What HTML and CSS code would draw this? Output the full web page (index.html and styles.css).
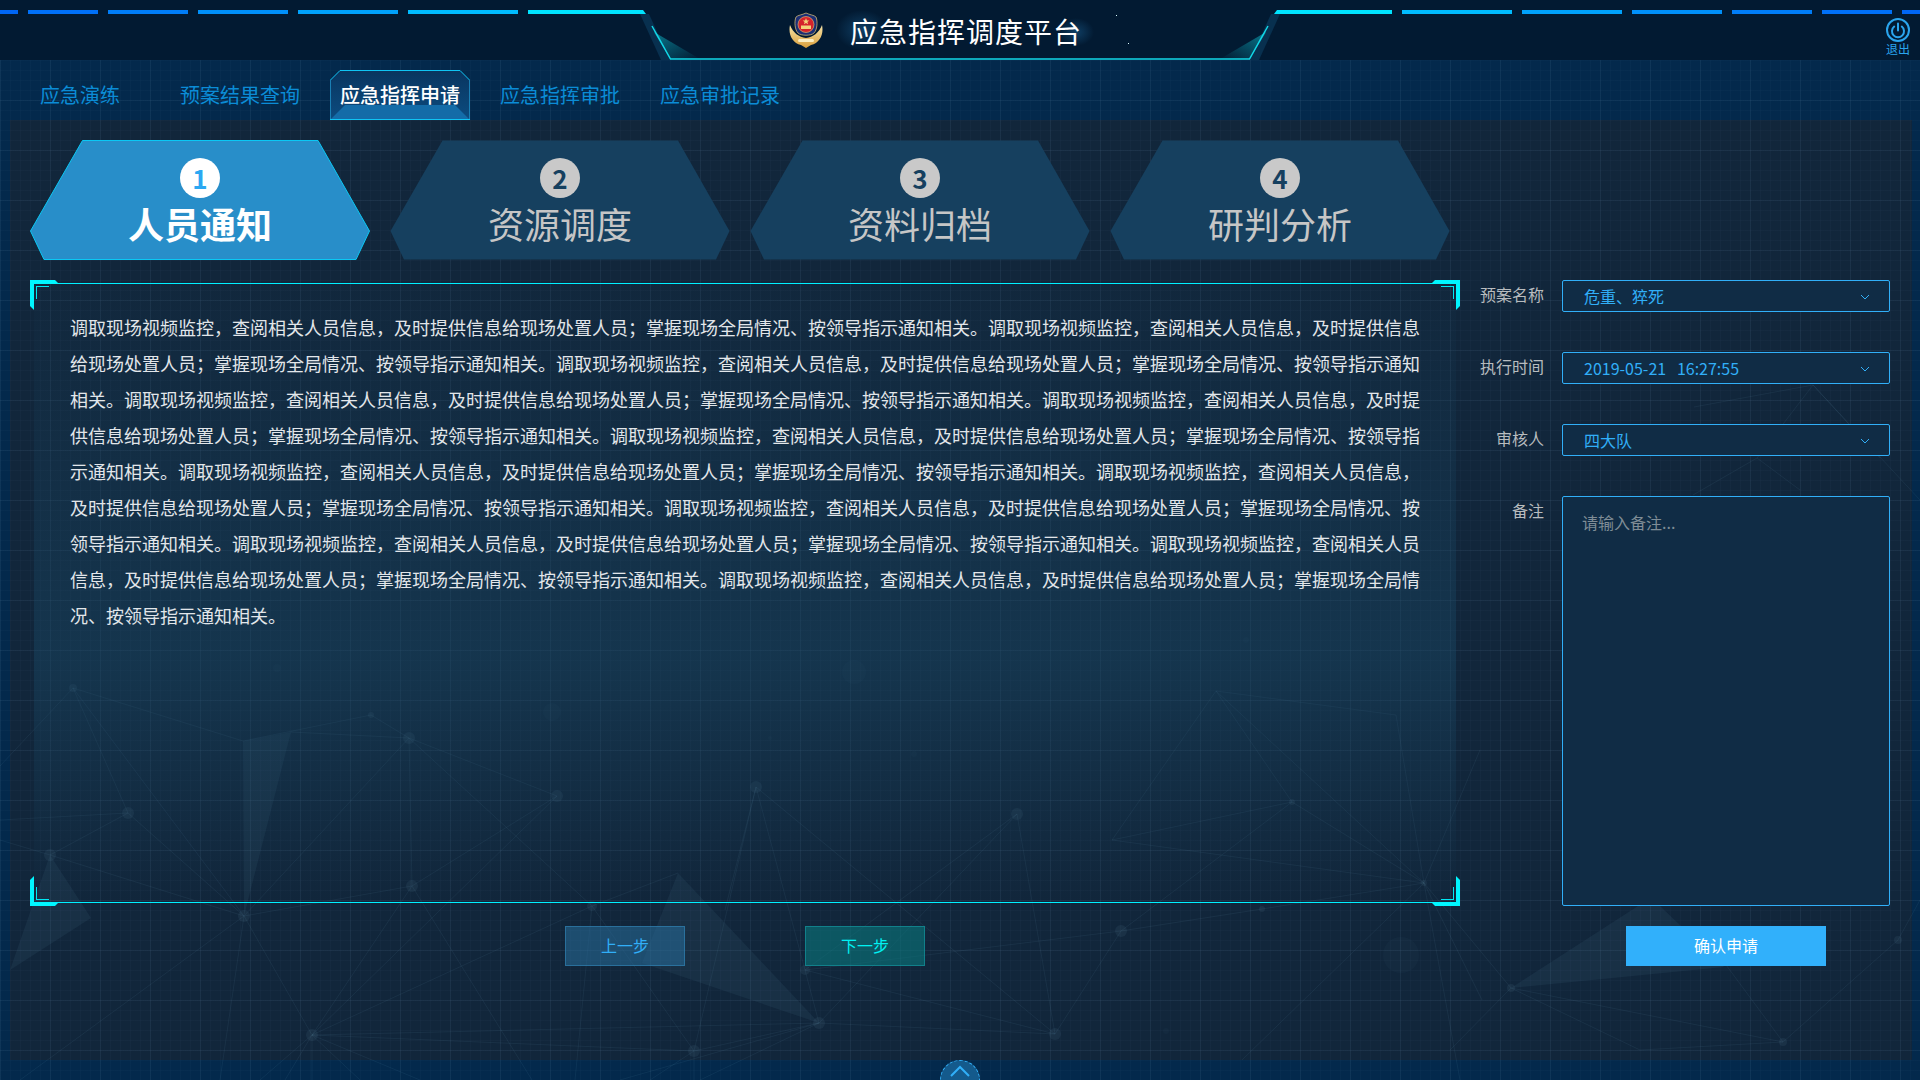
FILE: index.html
```html
<!DOCTYPE html>
<html lang="zh-CN">
<head>
<meta charset="utf-8">
<title>应急指挥调度平台</title>
<link rel="stylesheet" href="styles.css">
</head>
<body>
<div class="page">
  <svg class="network" viewBox="0 0 1920 1080" width="1920" height="1080" aria-hidden="true">
    <g class="net-fill">
      <polygon points="243,741 291,732 244,916"/>
      <polygon points="50,855 91,918 10,970"/>
      <polygon points="678,873 819,1023 642,963"/>
      <polygon points="1511,988 1638,906 1660,906 1724,967"/>
    </g>
    <path class="net-lines" d="M73 688L128 813M73 688L243 741M73 688L244 916M73 688L0 766M128 813L50 855M128 813L244 916M128 813L0 820M50 855L244 916M50 855L0 840M243 741L371 715M371 715L409 738M291 732L409 738M409 738L557 796M409 738L244 916M409 738L412 886M409 738L592 906M557 796L412 886M557 796L312 1035M412 886L244 916M412 886L312 1035M412 886L532 1080M592 906L312 1035M592 906L694 1051M592 906L678 873M592 906L575 1080M244 916L312 1035M244 916L20 1080M244 916L220 1080M312 1035L694 1051M312 1035L819 1023M312 1035L260 1080M312 1035L285 1080M312 1035L312 1080M312 1035L360 1080M312 1035L420 1080M694 1051L819 1023M694 1051L650 1080M694 1051L694 1080M694 1051L756 787M756 787L725 910M756 787L805 970M756 787L1055 1034M805 970L819 1023M805 970L1055 1034M805 970L1121 931M1017 814L805 970M1017 814L819 1023M1017 814L1055 1034M819 1023L1055 1034M819 1023L700 1080M819 1023L620 1080M1121 931L1262 909M1262 909L1424 883M1121 931L1055 1034M1121 931L1292 802M1292 802L1112 840M1112 840L1424 883M1292 802L1424 883M1216 691L1112 840M1216 691L1292 802M1216 691L1396 715M1216 691L1424 883M1396 715L1424 883M1424 883L1242 1060M1424 883L1482 1000M1424 883L1480 750M1424 883L1511 988M1424 883L1460 1080M1511 988L1783 1042M1511 988L1450 1050M1511 988L1640 1050M1783 1042L1898 940M1783 1042L1715 950M1783 1042L1640 1050M1898 940L1920 900M1813 385L1694 407M1813 385L1757 458M1813 385L1880 458M1813 385L1920 500M1757 458L1800 490M1757 458L1693 495"/>
    <g class="net-nodes">
      <circle cx="73" cy="688" r="4"/><circle cx="128" cy="813" r="6"/><circle cx="50" cy="855" r="6"/><circle cx="244" cy="916" r="6"/><circle cx="409" cy="738" r="6"/><circle cx="371" cy="715" r="3"/><circle cx="557" cy="796" r="6"/><circle cx="412" cy="886" r="6"/><circle cx="592" cy="906" r="5"/><circle cx="312" cy="1035" r="6"/><circle cx="694" cy="1051" r="6"/><circle cx="756" cy="787" r="6"/><circle cx="1017" cy="814" r="6"/><circle cx="1292" cy="802" r="3"/><circle cx="1424" cy="883" r="3"/><circle cx="1121" cy="931" r="6"/><circle cx="1262" cy="909" r="3"/><circle cx="805" cy="970" r="5"/><circle cx="819" cy="1023" r="6"/><circle cx="1055" cy="1034" r="6"/><circle cx="1511" cy="988" r="4"/><circle cx="1783" cy="1042" r="4"/><circle cx="1898" cy="940" r="4"/>
    </g>
    <g class="net-faint">
      <circle cx="854" cy="672" r="12"/><circle cx="552" cy="712" r="9"/><circle cx="277" cy="668" r="4"/><circle cx="1401" cy="955" r="18"/><circle cx="1246" cy="640" r="3"/><circle cx="914" cy="754" r="3"/><circle cx="770" cy="738" r="2"/><circle cx="1166" cy="1031" r="3"/>
    </g>
  </svg>

  <header class="topbar">
    <svg class="topbar-art" viewBox="620 0 680 60" width="680" height="60" aria-hidden="true">
      <defs>
        <linearGradient id="glowL" x1="0" y1="0" x2="1" y2="1"><stop offset="0" stop-color="#10d5e5" stop-opacity=".5"/><stop offset="1" stop-color="#10d5e5" stop-opacity="0"/></linearGradient>
        <linearGradient id="glowR" x1="1" y1="0" x2="0" y2="1"><stop offset="0" stop-color="#10d5e5" stop-opacity=".5"/><stop offset="1" stop-color="#10d5e5" stop-opacity="0"/></linearGradient>
        <radialGradient id="blob"><stop offset="0" stop-color="#1a5c8c" stop-opacity=".55"/><stop offset="1" stop-color="#1a5c8c" stop-opacity="0"/></radialGradient>
      </defs>
      <polygon class="slant" points="640,14 649,14 670,60 661,60"/>
      <polygon class="slant" points="1280,14 1271,14 1250,60 1259,60"/>
      <polygon fill="url(#glowL)" points="654,32 670,59 700,59"/>
      <polygon fill="url(#glowR)" points="1266,32 1250,59 1220,59"/>
      <polyline class="edge" points="652,26 670.5,59 1249.5,59 1268,26"/>
      <ellipse fill="url(#blob)" cx="862" cy="30" rx="26" ry="20"/>
      <ellipse fill="url(#blob)" cx="1076" cy="32" rx="18" ry="14"/>
      <rect class="speck" x="1116" y="15" width="1" height="1"/><rect class="speck" x="1128" y="43" width="1" height="1"/>
    </svg>
    <div class="dashes">
      <span class="dash dash-a w18"></span><span class="dash dash-b w70"></span><span class="dash dash-c w80"></span><span class="dash dash-d w90"></span><span class="dash dash-e w100"></span><span class="dash dash-f w110"></span><span class="dash dash-g w118 cut-l"></span>
    </div>
    <div class="brand">
      <svg class="emblem" viewBox="0 0 34 36" width="34" height="36" aria-hidden="true">
        <defs><linearGradient id="gold" x1="0" y1="0" x2="0" y2="1"><stop offset="0" stop-color="#f6e3a8"/><stop offset="1" stop-color="#d99f3c"/></linearGradient></defs>
        <path fill="url(#gold)" d="M1 13C-1 22 3 31 12 33L17 36L22 33C31 31 35 22 33 13C30 21 24 25 17 26C10 25 4 21 1 13Z"/>
        <path fill="#1b2f74" stroke="#e8c878" stroke-width=".7" d="M17 1C21 3 25 3 27 5C29 10 28 18 25 21C22 24 12 24 9 21C6 18 5 10 7 5C9 3 13 3 17 1Z"/>
        <circle cx="17" cy="12.5" r="8" fill="#d5232c" stroke="#e8c878" stroke-width=".6"/>
        <rect x="12" y="13.5" width="10" height="3.5" fill="#f2d27a"/>
        <path fill="#f2d27a" d="M17 6l.9 2.4h2.4l-1.9 1.5.7 2.4-2.1-1.4-2.1 1.4.7-2.4-1.9-1.5h2.4z"/>
        <rect x="9" y="27" width="16" height="3" rx="1.5" fill="#fbeec2"/>
      </svg>
      <h1 class="brand-title">应急指挥调度平台</h1>
    </div>
    <div class="dashes">
      <span class="dash dash-g w118 cut-r"></span><span class="dash dash-f w110"></span><span class="dash dash-e w100"></span><span class="dash dash-d w90"></span><span class="dash dash-c w80"></span><span class="dash dash-b w70"></span><span class="dash dash-a w18"></span>
    </div>
    <div class="logout">
      <svg viewBox="0 0 24 24" width="24" height="24" aria-hidden="true">
        <circle cx="12" cy="12" r="11" class="logout-ring"/>
        <path class="logout-ring" d="M8.2 8.6a6 6 0 1 0 7.6 0M12 5.5v7"/>
      </svg>
      <span class="logout-text">退出</span>
    </div>
  </header>

  <nav class="tabs">
    <a class="tab tab-first">应急演练</a>
    <a class="tab">预案结果查询</a>
    <a class="tab tab-active">
      <svg class="tab-shape" viewBox="0 0 140 50" width="140" height="50" aria-hidden="true">
        <defs><linearGradient id="tabfill" x1="0" y1="0" x2="0" y2="1"><stop offset="0" stop-color="#09355f"/><stop offset="1" stop-color="#0c4c80"/></linearGradient></defs>
        <polygon fill="url(#tabfill)" points="10,.5 130,.5 139.5,10 139.5,49.5 .5,49.5 .5,10"/>
        <polygon fill="#146ca8" points="15,35 125,35 139.5,49.5 .5,49.5"/>
        <polyline class="tab-edge-side" points=".5,49.5 .5,10"/>
        <polyline class="tab-edge-side" points="139.5,49.5 139.5,10"/>
        <polyline class="tab-edge" points=".5,10 10,.5 130,.5 139.5,10"/>
        <line class="tab-edge" x1="0" y1="49.5" x2="140" y2="49.5"/>
      </svg>
      <span class="tab-label">应急指挥申请</span>
    </a>
    <a class="tab">应急指挥审批</a>
    <a class="tab">应急审批记录</a>
  </nav>

  <main class="content">
    <ol class="steps">
      <li class="step step-active">
        <svg class="step-shape" viewBox="0 0 340 120" width="340" height="120" aria-hidden="true"><polygon points="52.5,.5 288,.5 339.5,91 326,119.5 14,119.5 .5,91"/></svg>
        <span class="step-num">1</span><span class="step-title">人员通知</span>
      </li>
      <li class="step">
        <svg class="step-shape" viewBox="0 0 340 120" width="340" height="120" aria-hidden="true"><polygon points="52.5,.5 288,.5 339.5,91 326,119.5 14,119.5 .5,91"/></svg>
        <span class="step-num">2</span><span class="step-title">资源调度</span>
      </li>
      <li class="step">
        <svg class="step-shape" viewBox="0 0 340 120" width="340" height="120" aria-hidden="true"><polygon points="52.5,.5 288,.5 339.5,91 326,119.5 14,119.5 .5,91"/></svg>
        <span class="step-num">3</span><span class="step-title">资料归档</span>
      </li>
      <li class="step">
        <svg class="step-shape" viewBox="0 0 340 120" width="340" height="120" aria-hidden="true"><polygon points="52.5,.5 288,.5 339.5,91 326,119.5 14,119.5 .5,91"/></svg>
        <span class="step-num">4</span><span class="step-title">研判分析</span>
      </li>
    </ol>

    <div class="workspace">
      <section class="panel">
        <i class="corner corner-tl"></i><i class="corner corner-tr"></i><i class="corner corner-bl"></i><i class="corner corner-br"></i>
        <div class="panel-surface">
          <p class="panel-text">调取现场视频监控，查阅相关人员信息，及时提供信息给现场处置人员；掌握现场全局情况、按领导指示通知相关。调取现场视频监控，查阅相关人员信息，及时提供信息给现场处置人员；掌握现场全局情况、按领导指示通知相关。调取现场视频监控，查阅相关人员信息，及时提供信息给现场处置人员；掌握现场全局情况、按领导指示通知相关。调取现场视频监控，查阅相关人员信息，及时提供信息给现场处置人员；掌握现场全局情况、按领导指示通知相关。调取现场视频监控，查阅相关人员信息，及时提供信息给现场处置人员；掌握现场全局情况、按领导指示通知相关。调取现场视频监控，查阅相关人员信息，及时提供信息给现场处置人员；掌握现场全局情况、按领导指示通知相关。调取现场视频监控，查阅相关人员信息，及时提供信息给现场处置人员；掌握现场全局情况、按领导指示通知相关。调取现场视频监控，查阅相关人员信息，及时提供信息给现场处置人员；掌握现场全局情况、按领导指示通知相关。调取现场视频监控，查阅相关人员信息，及时提供信息给现场处置人员；掌握现场全局情况、按领导指示通知相关。调取现场视频监控，查阅相关人员信息，及时提供信息给现场处置人员；掌握现场全局情况、按领导指示通知相关。调取现场视频监控，查阅相关人员信息，及时提供信息给现场处置人员；掌握现场全局情况、按领导指示通知相关。调取现场视频监控，查阅相关人员信息，及时提供信息给现场处置人员；掌握现场全局情况、按领导指示通知相关。</p>
        </div>
      </section>

      <form class="form">
        <div class="field">
          <span class="field-label">预案名称</span>
          <div class="select"><span>危重、猝死</span><svg class="chevron" viewBox="0 0 10 6" width="10" height="6" aria-hidden="true"><polyline points="1,1 5,5 9,1"/></svg></div>
        </div>
        <div class="field">
          <span class="field-label">执行时间</span>
          <div class="select"><span class="keep-space">2019-05-21   16:27:55</span><svg class="chevron" viewBox="0 0 10 6" width="10" height="6" aria-hidden="true"><polyline points="1,1 5,5 9,1"/></svg></div>
        </div>
        <div class="field">
          <span class="field-label">审核人</span>
          <div class="select"><span>四大队</span><svg class="chevron" viewBox="0 0 10 6" width="10" height="6" aria-hidden="true"><polyline points="1,1 5,5 9,1"/></svg></div>
        </div>
        <div class="field field-grow">
          <span class="field-label field-label-top">备注</span>
          <textarea class="notes" placeholder="请输入备注..."></textarea>
        </div>
      </form>

      <div class="actions">
        <button type="button" class="btn btn-prev">上一步</button>
        <button type="button" class="btn btn-next">下一步</button>
      </div>
      <div class="confirm-row">
        <button type="button" class="btn btn-confirm">确认申请</button>
      </div>
    </div>
  </main>

  <footer class="bottombar">
    <div class="collapse">
      <svg viewBox="0 0 22 12" width="22" height="12" aria-hidden="true"><polyline points="2,11 11,2 20,11"/></svg>
    </div>
  </footer>
</div>
</body>
</html>
```

FILE: styles.css
```css
* { box-sizing: border-box; }
html, body { margin: 0; padding: 0; background: #03284a; }
body { font-family: "Noto Sans CJK SC", "Noto Sans", sans-serif; }

.page {
  position: relative;
  width: 1920px;
  height: 1080px;
  overflow: hidden;
  display: flex;
  flex-direction: column;
  background: #03294c;
}
.page::after {
  content: "";
  position: absolute;
  inset: 0;
  pointer-events: none;
  background-image:
    linear-gradient(to right, rgba(160,210,240,.05) 1px, transparent 1px),
    linear-gradient(to bottom, rgba(160,210,240,.05) 1px, transparent 1px),
    linear-gradient(to right, rgba(160,210,240,.022) 1px, transparent 1px),
    linear-gradient(to bottom, rgba(160,210,240,.022) 1px, transparent 1px);
  background-size: 50px 50px, 50px 50px, 10px 10px, 10px 10px;
}
.network { position: absolute; left: 0; top: 0; z-index: 1; pointer-events: none; }
.net-fill polygon { fill: rgba(120,175,205,.075); }
.net-lines { fill: none; stroke: rgba(130,185,215,.075); stroke-width: 1; }
.net-nodes circle { fill: rgba(120,165,190,.09); }
.net-faint circle { fill: rgba(120,165,190,.035); }

/* header */
.topbar {
  position: relative;
  z-index: 2;
  flex: 0 0 60px;
  display: flex;
  align-items: flex-start;
  background: #021a32;
}
.topbar-art { position: absolute; left: 620px; top: 0; }
.slant { fill: #08304f; }
.edge { fill: none; stroke: #12d8e8; stroke-width: 1.5; }
.speck { fill: #dff; }
.dashes { display: flex; gap: 10px; margin-top: 10px; flex: 0 0 646px; position: relative; }
.dash { display: block; height: 4px; }
.w18 { width: 18px; } .w70 { width: 70px; } .w80 { width: 80px; } .w90 { width: 90px; }
.w100 { width: 100px; } .w110 { width: 110px; } .w118 { width: 118px; }
.dash-a { background: #0066f5; } .dash-b { background: #0070f8; } .dash-c { background: #007df8; }
.dash-d { background: #0090fa; } .dash-e { background: #00a2fc; } .dash-f { background: #00bcff; }
.dash-g { background: #00e4ff; }
.cut-l { clip-path: polygon(0 0, calc(100% - 3px) 0, 100% 100%, 0 100%); }
.cut-r { clip-path: polygon(3px 0, 100% 0, 100% 100%, 0 100%); }
.brand {
  flex: 0 0 628px;
  position: relative;
  display: flex;
  align-items: center;
  height: 60px;
  padding-left: 143px;
}
.emblem { margin-top: -1px; }
.brand-title {
  margin: 2px 0 0 27px;
  color: #fff;
  font-size: 28px;
  font-weight: 400;
  letter-spacing: 1px;
  line-height: 40px;
  white-space: nowrap;
}
.logout {
  position: absolute;
  right: 10px;
  top: 18px;
  width: 24px;
  display: flex;
  flex-direction: column;
  align-items: center;
}
.logout-ring { fill: none; stroke: #2aa5ee; stroke-width: 2; stroke-linecap: round; }
.logout-text { color: #2aa5ee; font-size: 12px; line-height: 14px; white-space: nowrap; }

/* nav */
.tabs {
  position: relative;
  z-index: 2;
  flex: 0 0 60px;
  display: flex;
  align-items: flex-end;
  padding-left: 20px;
}
.tab {
  position: relative;
  height: 50px;
  padding: 0 20px;
  color: #0b8cd6;
  font-size: 20px;
  line-height: 50px;
  white-space: nowrap;
}
.tab-first { margin-right: 20px; }
.tab-active { color: #fff; font-weight: 500; }
.tab-shape { position: absolute; left: 10px; top: 0; }
.tab-label { position: relative; }
.tab-edge { fill: none; stroke: #10c4f4; stroke-width: 1; }
.tab-edge-side { fill: none; stroke: #1a7fb4; stroke-width: 1; }

/* content */
.content {
  flex: 1 1 auto;
  margin: 0 8px 0 10px;
  padding: 20px 0 0 20px;
  background: #11263b;
}
.steps {
  position: relative;
  z-index: 2;
  list-style: none;
  margin: 0;
  padding: 0;
  display: flex;
  gap: 20px;
}
.step {
  position: relative;
  width: 340px;
  height: 120px;
  display: flex;
  flex-direction: column;
  align-items: center;
  padding-top: 18px;
}
.step-shape { position: absolute; left: 0; top: 0; }
.step-shape polygon { fill: #16405f; }
.step-active .step-shape polygon { fill: #288ec9; stroke: #0bc8f4; stroke-width: 1; }
.step-num {
  position: relative;
  width: 40px;
  height: 40px;
  border-radius: 50%;
  background: #c9c9c9;
  color: #16405f;
  font-size: 26px;
  font-weight: 700;
  line-height: 40px;
  text-align: center;
}
.step-title {
  position: relative;
  margin-top: -2px;
  color: #c6c6c6;
  font-size: 36px;
  line-height: 54px;
  white-space: nowrap;
}
.step-active .step-num { background: #fff; color: #2ca8f2; }
.step-active .step-title { color: #fff; font-weight: 700; }

.workspace {
  position: relative;
  z-index: 2;
  margin-top: 20px;
  display: grid;
  grid-template-columns: 1430px 430px;
  grid-template-rows: 626px 40px;
  row-gap: 20px;
}
.panel { position: relative; padding: 3px 4px; height: 626px; }
.panel-surface {
  height: 100%;
  padding: 25px 34px 0 36px;
  border-top: 1px solid #00f0ff;
  border-bottom: 1px solid #00f0ff;
  background: linear-gradient(180deg, rgba(26,72,100,.04) 0%, rgba(26,76,106,.4) 60%, rgba(26,70,100,0) 100%);
}
.panel-text {
  width: 1350px;
  margin: 0;
  color: #e2e6ea;
  font-size: 18px;
  line-height: 36px;
}
.corner { position: absolute; width: 30px; height: 30px; }
.corner::before {
  content: "";
  position: absolute;
  inset: 0;
  background: #00f6ff;
  clip-path: polygon(0 0, 25px 0, 29px 4px, 4px 4px, 4px 30px, 0 26px);
}
.corner::after {
  content: "";
  position: absolute;
  left: 6px;
  top: 6px;
  width: 12px;
  height: 12px;
  border-top: 1px solid #00e8f4;
  border-left: 1px solid #00e8f4;
}
.corner-tl { left: 0; top: 0; }
.corner-tr { right: 0; top: 0; transform: scaleX(-1); }
.corner-bl { left: 0; bottom: 0; transform: scaleY(-1); }
.corner-br { right: 0; bottom: 0; transform: scale(-1, -1); }

.form { display: flex; flex-direction: column; gap: 40px; height: 626px; }
.field { display: flex; align-items: center; height: 32px; }
.field-grow { flex: 1 1 auto; align-items: flex-start; }
.field-label {
  width: 84px;
  flex: 0 0 84px;
  margin-right: 18px;
  color: #b8bcbf;
  font-size: 16px;
  line-height: 24px;
  margin-top: -4px;
  text-align: right;
}
.field-label-top { margin-top: 2px; }
.select {
  width: 328px;
  height: 32px;
  padding: 0 19px 0 21px;
  display: flex;
  align-items: center;
  justify-content: space-between;
  border: 1px solid #31aff8;
  border-radius: 2px;
  background: #102c45;
  color: #31aff8;
  font-size: 16px;
  line-height: 24px;
}
.keep-space { white-space: pre; }
.chevron { margin-top: 1px; }
.chevron polyline { fill: none; stroke: #31aff8; stroke-width: 1; }
.notes {
  display: block;
  width: 328px;
  height: 410px;
  padding: 13px 19px;
  resize: none;
  outline: none;
  border: 1px solid #31aff8;
  border-radius: 2px;
  background: #102c45;
  color: #31aff8;
  font-family: inherit;
  font-size: 16px;
  line-height: 24px;
}
.notes::placeholder { color: #7f8c96; opacity: 1; }

.actions { display: flex; gap: 120px; padding-left: 535px; }
.confirm-row { padding-left: 166px; }
.btn {
  display: block;
  height: 40px;
  width: 120px;
  padding: 0 0 2px;
  font-family: inherit;
  font-size: 16px;
  line-height: 24px;
  border: 1px solid transparent;
  cursor: pointer;
}
.btn-prev { background: rgba(40,110,155,.55); border-color: rgba(50,135,185,.6); color: #31aff8; }
.btn-next { background: rgba(10,120,125,.6); border-color: rgba(20,150,160,.65); color: #00f2f2; }
.btn-confirm { width: 200px; background: #31b0fb; border: 0; color: #fff; }

.bottombar {
  position: relative;
  z-index: 2;
  flex: 0 0 20px;
  height: 20px;
  min-height: 0;
  display: flex;
  justify-content: center;
}
.collapse {
  width: 40px;
  height: 40px;
  flex: 0 0 40px;
  display: flex;
  justify-content: center;
  padding-top: 4px;
  border: 1px dashed #31aff8;
  border-radius: 50%;
  background: #145a8c;
}
.collapse svg { display: block; }
.collapse polyline { fill: none; stroke: #31aff8; stroke-width: 2; }
```
